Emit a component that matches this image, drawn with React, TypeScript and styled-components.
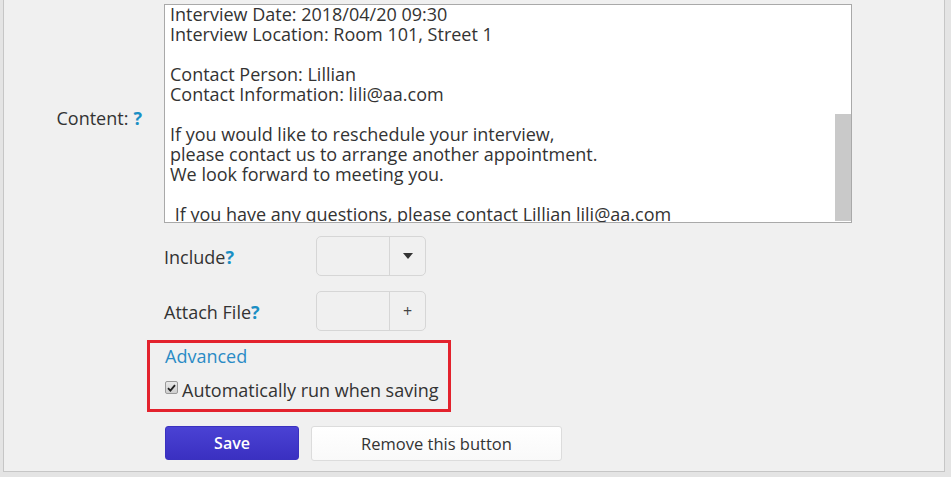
import React from "react";
import styled, { createGlobalStyle } from "styled-components";

const Global = createGlobalStyle`
  html, body { margin: 0; padding: 0; background: #e4e4e4; }
  body { font-family: "Open Sans", "Noto Sans", sans-serif; color: #333; overflow: hidden; }
`;

const Panel = styled.div`
  margin-left: 3px;
  width: 942px;
  height: 472px;
  box-sizing: border-box;
  background: #f0f0f0;
  border-left: 1px solid #c6c6c6;
  border-right: 1px solid #c6c6c6;
  border-bottom: 1px solid #c6c6c6;
  padding-top: 4px;
  display: flex;
  flex-direction: column;
`;

const Row = styled.div<{ $mt?: number }>`
  display: grid;
  grid-template-columns: 160px 1fr;
  margin-top: ${(p) => p.$mt ?? 0}px;
`;

const Label = styled.div`
  display: flex;
  align-items: center;
  justify-content: flex-end;
  padding-right: 22px;
  padding-top: 8px;
  font-size: 18px;
  color: #333;
`;

const Help = styled.span<{ $gap?: number }>`
  color: #1a8fc4;
  font-weight: 700;
  margin-left: ${(p) => p.$gap ?? 0}px;
`;

const TextBox = styled.div`
  width: 688px;
  height: 219px;
  box-sizing: border-box;
  background: #fff;
  border: 1px solid #a9a9a9;
  position: relative;
  overflow: hidden;
`;

const TextLines = styled.div`
  padding: 0 20px 0 5px;
  margin-top: -1px;
  font-size: 18px;
  line-height: 20px;
  color: #333;
  white-space: pre;
`;

const Scrollbar = styled.div`
  position: absolute;
  right: 0;
  top: 109px;
  width: 16px;
  height: 107px;
  background: #c9c9c9;
`;

const Field = styled.div`
  display: grid;
  grid-template-columns: 152px auto;
  align-items: center;
`;

const FieldLabel = styled.div`
  font-size: 18px;
  color: #333;
  margin-top: 2px;
`;

const Combo = styled.div`
  display: flex;
  width: 110px;
  height: 40px;
  box-sizing: border-box;
  border: 1px solid #d6d6d6;
  border-radius: 5px;
  background: #f0f0f0;
`;

const ComboInput = styled.div`
  width: 72px;
  border-right: 1px solid #d6d6d6;
`;

const ComboButton = styled.div`
  flex: 1;
  display: flex;
  align-items: center;
  justify-content: center;
  color: #444;
  font-size: 16px;
`;

const Callout = styled.div`
  margin: 9px 0 0 -17px;
  width: 304px;
  height: 72px;
  box-sizing: border-box;
  border: 3px solid #e3222d;
  padding: 1px 0 0 15px;
`;

const AdvancedLink = styled.a`
  display: block;
  color: #2a8bc5;
  font-size: 18px;
  line-height: 24px;
  text-decoration: none;
`;

const CheckRow = styled.label`
  display: flex;
  align-items: center;
  margin-top: 10px;
  font-size: 18px;
  line-height: 24px;
  color: #333;
`;

const CheckBox = styled.span`
  width: 13px;
  height: 13px;
  box-sizing: border-box;
  border: 1px solid #9a9a9a;
  border-radius: 2px;
  background: linear-gradient(#e8e8e8, #cfcfcf);
  display: flex;
  align-items: center;
  justify-content: center;
  margin-right: 4px;
  margin-top: -5px;
`;

const Buttons = styled.div`
  display: flex;
  gap: 12px;
  margin: 14px 0 0 1px;
`;

const Button = styled.button<{ $primary?: boolean }>`
  height: ${(p) => (p.$primary ? 34 : 35)}px;
  width: ${(p) => (p.$primary ? 134 : 251)}px;
  box-sizing: border-box;
  border-radius: 3px;
  font-family: "Open Sans", "Noto Sans", sans-serif;
  font-size: ${(p) => (p.$primary ? 16 : 16.5)}px;
  border: 1px solid ${(p) => (p.$primary ? "#3a31bf" : "#dcdcdc")};
  background: ${(p) => (p.$primary ? "linear-gradient(#4a42d4, #3a30c1)" : "linear-gradient(#ffffff, #f9f9f9)")};
  color: ${(p) => (p.$primary ? "#fff" : "#333")};
  font-weight: ${(p) => (p.$primary ? 600 : 400)};
  padding: 0;
`;

const lines = [
  "Interview Date: 2018/04/20 09:30",
  "Interview Location: Room 101, Street 1",
  "",
  "Contact Person: Lillian",
  "Contact Information: lili@aa.com",
  "",
  "If you would like to reschedule your interview,",
  "please contact us to arrange another appointment.",
  "We look forward to meeting you.",
  "",
  " If you have any questions, please contact Lillian lili@aa.com",
];

export default function App() {
  return (
    <>
      <Global />
      <Panel>
        <Row>
          <Label>
            Content: <Help $gap={5}>?</Help>
          </Label>
          <TextBox>
            <TextLines>{lines.join("\n")}</TextLines>
            <Scrollbar />
          </TextBox>
        </Row>
        <Row $mt={13}>
          <div />
          <Field>
            <FieldLabel>
              Include<Help>?</Help>
            </FieldLabel>
            <Combo>
              <ComboInput />
              <ComboButton>
                <svg width="10" height="6" viewBox="0 0 10 6">
                  <path d="M0 0h10L5 6z" fill="#333" />
                </svg>
              </ComboButton>
            </Combo>
          </Field>
        </Row>
        <Row $mt={15}>
          <div />
          <Field>
            <FieldLabel>
              Attach File<Help>?</Help>
            </FieldLabel>
            <Combo>
              <ComboInput />
              <ComboButton>+</ComboButton>
            </Combo>
          </Field>
        </Row>
        <Row>
          <div />
          <Callout>
            <AdvancedLink href="#">Advanced</AdvancedLink>
            <CheckRow>
              <CheckBox>
                <svg width="9" height="8" viewBox="0 0 9 8">
                  <path d="M1 4.2L3.4 6.6L8 1.2" stroke="#222" strokeWidth="1.8" fill="none" />
                </svg>
              </CheckBox>
              Automatically run when saving
            </CheckRow>
          </Callout>
        </Row>
        <Row>
          <div />
          <Buttons>
            <Button $primary>Save</Button>
            <Button>Remove this button</Button>
          </Buttons>
        </Row>
      </Panel>
    </>
  );
}
